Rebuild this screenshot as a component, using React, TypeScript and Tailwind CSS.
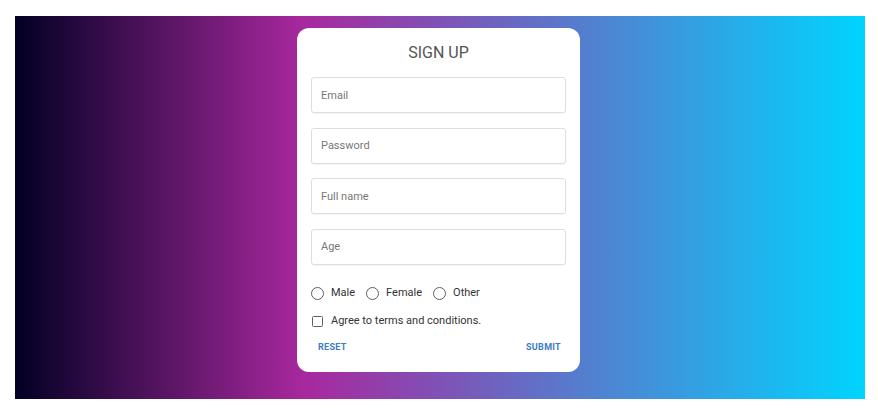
// Sign up card on a gradient backdrop

import React from 'react'

const font = { fontFamily: 'Roboto, "Liberation Sans", sans-serif' }

function Field({ placeholder, type = 'text' }: { placeholder: string; type?: string }) {
  return (
    <input
      type={type}
      placeholder={placeholder}
      className="h-[36px] w-full rounded-[3px] border border-[#dedede] bg-white px-[9px] text-[11px] text-[#333] shadow-[0_1px_1px_rgba(0,0,0,0.04)] outline-none placeholder:text-[#777]"
    />
  )
}

function Radio({ label }: { label: string }) {
  return (
    <label className="flex items-center gap-[7px]">
      <span className="h-[13px] w-[13px] rounded-full border-[1.5px] border-[#5f5f5f]" />
      <span className="text-[11px] text-[#333]">{label}</span>
    </label>
  )
}

export default function App() {
  return (
    <div className="min-h-screen bg-white pl-[15px] pr-[13px] pt-[16px]" style={font}>
      <div className="flex h-[383px] justify-center bg-[linear-gradient(90deg,#020024_0%,#a8289e_34%,#00d4ff_100%)] pt-[12px]">
        <form className="ml-[-3px] h-[344px] w-[283px] rounded-[12px] bg-white px-[14px] pt-[13px]">
          {/* 标题 */}
          <h1 className="text-center text-[16px] leading-[24px] text-[#555]">SIGN UP</h1>

          {/* 输入框 */}
          <div className="mt-[12px] flex flex-col gap-[14.5px]">
            <Field placeholder="Email" type="email" />
            <Field placeholder="Password" type="password" />
            <Field placeholder="Full name" />
            <Field placeholder="Age" />
          </div>

          {/* 性别 */}
          <div className="mt-[21px] flex h-[16px] items-center gap-[11px]">
            <Radio label="Male" />
            <Radio label="Female" />
            <Radio label="Other" />
          </div>

          {/* 条款 */}
          <label className="mt-[12px] flex h-[16px] items-center gap-[8px] pl-[1px]">
            <span className="h-[11px] w-[11px] rounded-[1.5px] border-[1.5px] border-[#5f5f5f]" />
            <span className="text-[11px] text-[#333]">Agree to terms and conditions.</span>
          </label>

          {/* 按钮 */}
          <div className="mt-[10px] flex h-[16px] items-center justify-between pl-[7px] pr-[5px]">
            <button type="reset" className="text-[9px] font-bold tracking-[0.3px] text-[#3b7cc4]">
              RESET
            </button>
            <button type="submit" className="text-[9px] font-bold tracking-[0.3px] text-[#3b7cc4]">
              SUBMIT
            </button>
          </div>
        </form>
      </div>
    </div>
  )
}
